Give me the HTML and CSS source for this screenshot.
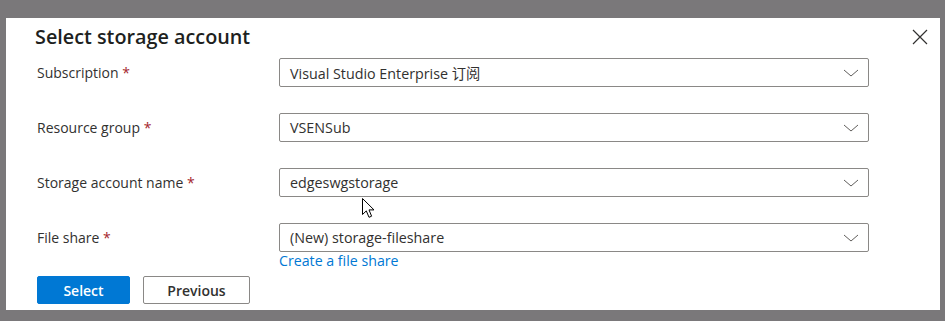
FILE: index.html
```html
<!DOCTYPE html>
<html lang="en">
<head>
  <meta charset="UTF-8">
  <title>Select storage account</title>
  <link rel="stylesheet" href="styles.css">
</head>
<body>

  <div class="dialog">
    <div class="header">
      <h2>Select storage account</h2>
      <button class="close" aria-label="Close">
        <svg width="16" height="16" viewBox="0 0 16 16"><path d="M1 1 L15 15 M15 1 L1 15" stroke="#323130" stroke-width="1.2" fill="none"/></svg>
      </button>
    </div>

    <form class="fields">
      <label>Subscription <span class="req">*</span></label>
      <div class="select">
        <span>Visual Studio Enterprise 订阅</span>
        <svg class="chev" width="16" height="8" viewBox="0 0 16 8"><path d="M1 1 L8 7 L15 1" stroke="#605e5c" stroke-width="1" fill="none"/></svg>
      </div>

      <label>Resource group <span class="req">*</span></label>
      <div class="select">
        <span>VSENSub</span>
        <svg class="chev" width="16" height="8" viewBox="0 0 16 8"><path d="M1 1 L8 7 L15 1" stroke="#605e5c" stroke-width="1" fill="none"/></svg>
      </div>

      <label>Storage account name <span class="req">*</span></label>
      <div class="select">
        <span>edgeswgstorage</span>
        <svg class="chev" width="16" height="8" viewBox="0 0 16 8"><path d="M1 1 L8 7 L15 1" stroke="#605e5c" stroke-width="1" fill="none"/></svg>
      </div>

      <label>File share <span class="req">*</span></label>
      <div class="field">
        <div class="select">
          <span>(New) storage-fileshare</span>
          <svg class="chev" width="16" height="8" viewBox="0 0 16 8"><path d="M1 1 L8 7 L15 1" stroke="#605e5c" stroke-width="1" fill="none"/></svg>
        </div>
        <a class="link" href="#">Create a file share</a>
      </div>
    </form>

    <div class="actions">
      <button class="btn primary">Select</button>
      <button class="btn">Previous</button>
    </div>

    <!-- mouse pointer over the storage field -->
    <svg class="pointer" width="13" height="21" viewBox="0 0 13 21"><path d="M0.5 0.5 L0.5 16.5 L4.3 12.9 L7 19.3 L9.6 18.2 L7 11.9 L12 11.9 Z" fill="#fff" stroke="#000" stroke-width="1" stroke-linejoin="round"/></svg>
  </div>

</body>
</html>
```

FILE: styles.css
```css
* {
  box-sizing: border-box;
}

html, body {
  height: 100%;
}

body {
  margin: 0;
  padding: 18px 5px 11px 6px;
  background: #7a787a;
  font-family: "Open Sans", "Noto Sans CJK SC", sans-serif;
  color: #323130;
  overflow: hidden;
}

.dialog {
  position: relative;
  background: #fff;
  height: 292px;
  padding: 0 0 0 31px;
}

.header {
  display: flex;
  justify-content: space-between;
  align-items: flex-start;
  height: 40px;
}

h2 {
  margin: 0;
  padding-top: 5px;
  margin-left: -2px;
  font-size: 19.8px;
  line-height: 28px;
  font-weight: 600;
  color: #201f1e;
}

.close {
  background: none;
  border: none;
  padding: 0;
  margin: 11px 12px 0 0;
  width: 16px;
  height: 16px;
  cursor: pointer;
}

.close svg {
  display: block;
}

.fields {
  display: grid;
  grid-template-columns: 242px 590px;
  row-gap: 26px;
  margin: 0;
}

label {
  font-size: 14px;
  line-height: 29px;
  height: 29px;
}

.req {
  color: #a4262c;
}

.select {
  display: flex;
  align-items: center;
  justify-content: space-between;
  height: 29px;
  padding: 0 9px 0 10px;
  border: 1px solid #8a8886;
  border-radius: 2px;
  font-size: 14.3px;
}

.chev {
  display: block;
}

.link {
  display: block;
  font-size: 14.2px;
  line-height: 18px;
  color: #0078d4;
  text-decoration: none;
}

.actions {
  display: flex;
  gap: 13px;
  margin-top: 6px;
}

.btn {
  height: 28px;
  width: 107px;
  background: #fff;
  border: 1px solid #8a8886;
  border-radius: 2px;
  font-family: "Open Sans", sans-serif;
  font-size: 14px;
  font-weight: 600;
  color: #323130;
  padding: 0;
}

.btn.primary {
  width: 93px;
  background: #0078d4;
  border-color: #0078d4;
  color: #fff;
}

.pointer {
  position: absolute;
  left: 356px;
  top: 180px;
}
```
